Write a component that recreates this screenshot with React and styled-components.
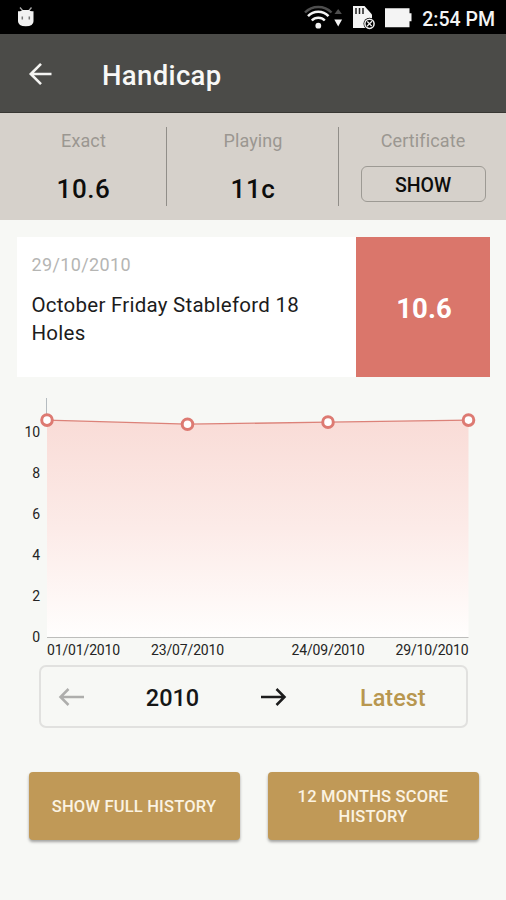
import React from "react";
import styled, { createGlobalStyle } from "styled-components";

const GlobalStyle = createGlobalStyle`
  * {
    box-sizing: border-box;
  }
  body {
    margin: 0;
    background: #f7f8f5;
    font-family: Roboto, sans-serif;
  }
  button {
    font-family: inherit;
    margin: 0;
    padding: 0;
    cursor: pointer;
  }
  svg {
    display: block;
  }
`;

const Screen = styled.div`
  display: flex;
  flex-direction: column;
  width: 506px;
  height: 900px;
  overflow: hidden;
  background: #f7f8f5;
`;

const StatusBar = styled.div`
  display: flex;
  justify-content: space-between;
  height: 34px;
  padding: 0 11px 0 16px;
  background: #000;
`;

const StatusGroup = styled.div`
  display: flex;
  align-items: center;
`;

const Clock = styled.span`
  margin-left: 10px;
  padding-top: 5px;
  color: #f4f4f4;
  font-size: 19.5px;
  font-weight: 500;
  line-height: 30px;
`;

const Toolbar = styled.header`
  display: flex;
  align-items: center;
  height: 79px;
  padding: 2px 0 0 28px;
  background: #4b4b48;
  border-bottom: 1px solid #383733;
`;

const BackButton = styled.button`
  display: flex;
  border: none;
  background: none;
`;

const Title = styled.h1`
  margin: 3px 0 0 49px;
  color: #f8f8f6;
  font-size: 27.5px;
  font-weight: 500;
  line-height: 32px;
  letter-spacing: 0.35px;
`;

const Stats = styled.section`
  display: flex;
  height: 107px;
  padding: 14px 0;
  background: #d6d1cb;
`;

const Stat = styled.div`
  display: flex;
  flex-direction: column;
  align-items: center;
  width: ${props => props.width}px;
  height: 79px;
  padding-left: 1px;
  border-right: ${props => (props.last ? "none" : "1px solid #918e89")};
`;

const StatLabel = styled.span`
  margin-top: 2px;
  color: #9b9791;
  font-size: 18px;
  line-height: 24px;
  letter-spacing: 0.12px;
`;

const StatValue = styled.span`
  margin-top: 20px;
  color: #0d0d0c;
  font-size: 26px;
  font-weight: 500;
  line-height: 32px;
  letter-spacing: 0.6px;
`;

const ShowButton = styled.button`
  width: 125px;
  height: 36px;
  margin-top: 13px;
  padding-top: 2px;
  color: #0d0d0c;
  font-size: 19.5px;
  font-weight: 500;
  border: 1.5px solid #9d9a94;
  border-radius: 6px;
  background: none;
`;

const Card = styled.section`
  display: flex;
  height: 140px;
  margin: 17px 16px 0 17px;
  background: #fff;
`;

const CardBody = styled.div`
  flex: 1;
  padding: 16px 20px 0 14.5px;
`;

const CardDate = styled.div`
  color: #b5b5b3;
  font-size: 18px;
  line-height: 24px;
  letter-spacing: 0.38px;
`;

const CardTitle = styled.div`
  margin-top: 15px;
  color: #1c1c1c;
  font-size: 20.5px;
  line-height: 27.5px;
  letter-spacing: 0.25px;
`;

const CardScore = styled.div`
  display: flex;
  align-items: center;
  justify-content: center;
  width: 134px;
  padding: 2px 0 0 2px;
  color: #fff;
  font-size: 27.5px;
  font-weight: 700;
  background: #da766b;
`;

const ChartBox = styled.div`
  height: 288px;
`;

const AxisText = styled.text`
  fill: #242424;
  font-size: 14px;
  letter-spacing: -0.15px;
`;

const YearNav = styled.nav`
  display: flex;
  align-items: center;
  width: 429px;
  height: 63px;
  margin-left: 39px;
  padding-left: 17px;
  border: 2px solid #e1e1df;
  border-radius: 7px;
`;

const NavButton = styled.button`
  display: flex;
  border: none;
  background: none;
`;

const Year = styled.span`
  width: 175px;
  padding-top: 2px;
  color: #161616;
  font-size: 23.5px;
  font-weight: 500;
  text-align: center;
`;

const Latest = styled.button`
  margin-left: 73px;
  padding-top: 2px;
  color: #b8974f;
  font-size: 23.5px;
  font-weight: 500;
  border: none;
  background: none;
`;

const Actions = styled.div`
  display: flex;
  gap: 28px;
  margin: 44px 27px 0 28.5px;
`;

const ActionButton = styled.button`
  width: 211px;
  height: 68px;
  padding: 2px 20px 0;
  color: #fbf3e2;
  font-size: 16.5px;
  font-weight: 500;
  line-height: 20px;
  letter-spacing: 0.2px;
  border: none;
  border-radius: 4px;
  background: #c09957;
  box-shadow: 0 2px 3px rgba(0, 0, 0, 0.35);
`;

const AndroidIcon = () => (
  <svg width="20" height="34" viewBox="0 0 20 34">
    <path d="M4 7.5l2.5 3M15.5 7.5l-2.5 3" stroke="#aaa" strokeWidth="1.3" />
    <path
      d="M2 11.2q3 .6 4.5-1.2h6.5q1.5 1.8 4.5 1.2v10q0 5-7.7 5t-7.8-5z"
      fill="#f1f1f1"
    />
    <path d="M6.3 16.5v3M13.3 16.5v3" stroke="#777" strokeWidth="1.5" />
  </svg>
);

const StatusIcons = () => (
  <svg width="109" height="34" viewBox="302 0 109 34">
    <g fill="none" strokeWidth="2.5">
      <path d="M304 12.5a18.5 18.5 0 0 1 26.5 0" stroke="#4e4e4e" />
      <path d="M307 16.2a14 14 0 0 1 20.5 0" stroke="#f4f4f4" />
      <path d="M310.8 20.5a9 9 0 0 1 13 0" stroke="#f4f4f4" />
    </g>
    <circle cx="317.3" cy="25.7" r="2.9" fill="#f4f4f4" />
    <path d="M333.5 14l3.7-5 3.7 5z" fill="#4e4e4e" />
    <path d="M333.3 19.5h7.8l-3.9 7z" fill="#f4f4f4" />
    <path d="M352 6h11.5l7.5 8.5V28h-19z" fill="#f4f4f4" />
    <path d="M355 8v6M358.5 8v6M362 8v6" stroke="#222" strokeWidth="1.5" />
    <circle cx="368.5" cy="23.8" r="6" fill="#000" />
    <circle
      cx="368.5"
      cy="23.8"
      r="4.6"
      fill="none"
      stroke="#f4f4f4"
      strokeWidth="1.5"
    />
    <path d="M366 26.3l5-5M366.3 21.5l4.4 4.6" stroke="#f4f4f4" strokeWidth="1.3" />
    <path d="M384 8.3h24.5v5h2v8h-2v6H384z" fill="#f4f4f4" />
  </svg>
);

const BackIcon = () => (
  <svg width="25" height="24" viewBox="0 0 25 24">
    <path
      d="M13 1.8L2.8 12 13 22.2M2.8 12H23.5"
      fill="none"
      stroke="#f4f4f2"
      strokeWidth="2.6"
    />
  </svg>
);

const ArrowIcon = ({ color, flip }) => (
  <svg width="27" height="20" viewBox="0 0 27 20">
    <g
      fill="none"
      stroke={color}
      strokeWidth="2.5"
      transform={flip ? "translate(27 0) scale(-1 1)" : undefined}
    >
      <path d="M10.5 2L2.5 10l8 8M2.5 10H26" />
    </g>
  </svg>
);

const TICKS = [0, 2, 4, 6, 8, 10];

const POINTS = [
  { date: "01/01/2010", value: 10.6 },
  { date: "23/07/2010", value: 10.4 },
  { date: "24/09/2010", value: 10.5 },
  { date: "29/10/2010", value: 10.6 }
];

const LEFT = 47;
const RIGHT = 468.5;
const BOTTOM = 260;

const getX = index => LEFT + (index * (RIGHT - LEFT)) / (POINTS.length - 1);
const getY = value => BOTTOM - value * 20.46;

const getAnchor = index => {
  if (index === 0) return "start";
  if (index === POINTS.length - 1) return "end";
  return "middle";
};

const Chart = () => {
  const line = POINTS.map((p, i) => `${getX(i)},${getY(p.value)}`).join(" ");
  return (
    <ChartBox>
      <svg width="506" height="288">
        <defs>
          <linearGradient id="area" x1="0" y1="0" x2="0" y2="1">
            <stop offset="0" stopColor="#f9dcd7" />
            <stop offset="0.5" stopColor="#fcebe8" />
            <stop offset="1" stopColor="#fffefd" />
          </linearGradient>
        </defs>
        <path d={`M${LEFT - 0.5} 21V${getY(10.6)}`} stroke="#b5bcc0" />
        <polygon
          points={`${LEFT},${BOTTOM} ${line} ${RIGHT},${BOTTOM}`}
          fill="url(#area)"
        />
        <path d={`M${LEFT} ${BOTTOM + 0.5}H${RIGHT}`} stroke="#bdbdbb" />
        <polyline points={line} fill="none" stroke="#dc8279" strokeWidth="1.3" />
        {TICKS.map(tick => (
          <AxisText key={tick} x="40" y={getY(tick) + 5} textAnchor="end">
            {tick}
          </AxisText>
        ))}
        {POINTS.map((p, i) => (
          <g key={p.date}>
            <circle
              cx={getX(i)}
              cy={getY(p.value)}
              r="5.3"
              fill="#fff"
              stroke="#dd7a72"
              strokeWidth="3"
            />
            <AxisText x={getX(i)} y="278" textAnchor={getAnchor(i)}>
              {p.date}
            </AxisText>
          </g>
        ))}
      </svg>
    </ChartBox>
  );
};

const App = () => {
  return (
    <>
      <GlobalStyle />
      <Screen>
        <StatusBar>
          <StatusGroup>
            <AndroidIcon />
          </StatusGroup>
          <StatusGroup>
            <StatusIcons />
            <Clock>2:54 PM</Clock>
          </StatusGroup>
        </StatusBar>
        <Toolbar>
          <BackButton aria-label="Back">
            <BackIcon />
          </BackButton>
          <Title>Handicap</Title>
        </Toolbar>
        <Stats>
          <Stat width={167}>
            <StatLabel>Exact</StatLabel>
            <StatValue>10.6</StatValue>
          </Stat>
          <Stat width={172}>
            <StatLabel>Playing</StatLabel>
            <StatValue>11c</StatValue>
          </Stat>
          <Stat width={167} last>
            <StatLabel>Certificate</StatLabel>
            <ShowButton>SHOW</ShowButton>
          </Stat>
        </Stats>
        <Card>
          <CardBody>
            <CardDate>29/10/2010</CardDate>
            <CardTitle>October Friday Stableford 18 Holes</CardTitle>
          </CardBody>
          <CardScore>10.6</CardScore>
        </Card>
        <Chart />
        <YearNav>
          <NavButton aria-label="Previous year">
            <ArrowIcon color="#aeaeac" />
          </NavButton>
          <Year>2010</Year>
          <NavButton aria-label="Next year">
            <ArrowIcon color="#1c1c1c" flip />
          </NavButton>
          <Latest>Latest</Latest>
        </YearNav>
        <Actions>
          <ActionButton>SHOW FULL HISTORY</ActionButton>
          <ActionButton>12 MONTHS SCORE HISTORY</ActionButton>
        </Actions>
      </Screen>
    </>
  );
};

export default App;
